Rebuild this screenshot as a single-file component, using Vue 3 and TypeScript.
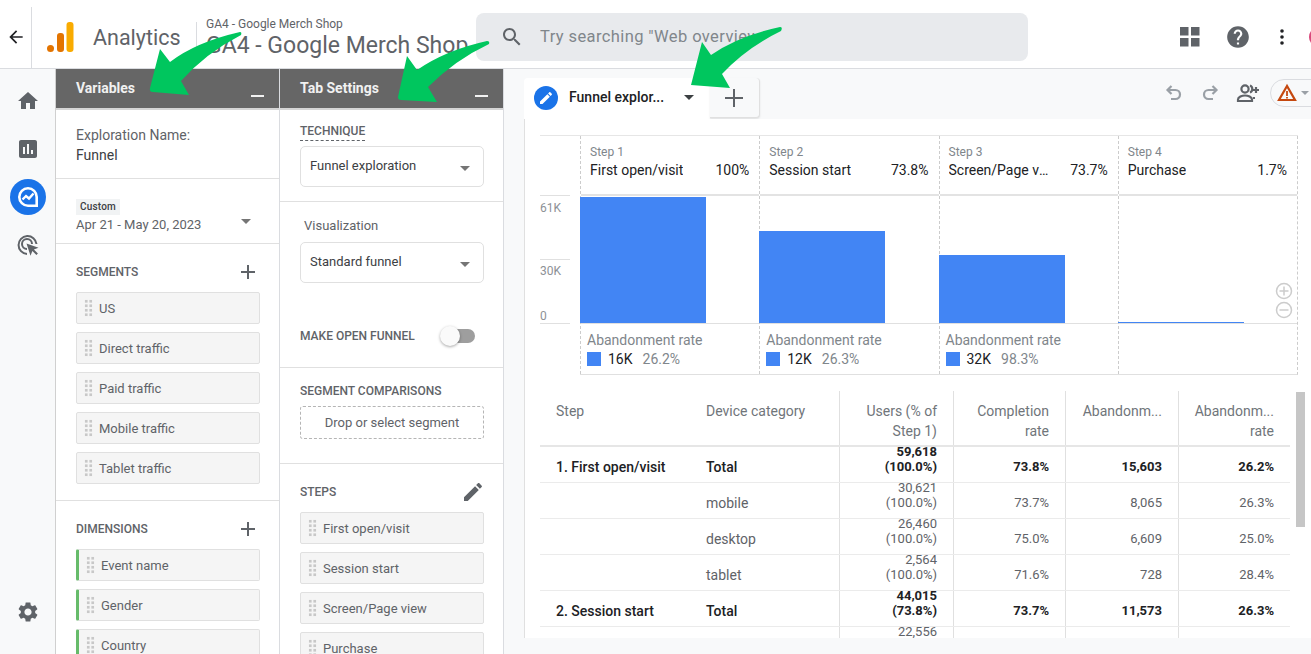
<script setup lang="ts">
// funnel data
const steps = [
  { label: 'Step 1', name: 'First open/visit', pct: '100%', height: 126, lost: '16K', rate: '26.2%' },
  { label: 'Step 2', name: 'Session start', pct: '73.8%', height: 92, lost: '12K', rate: '26.3%' },
  { label: 'Step 3', name: 'Screen/Page view', pct: '73.7%', height: 68, lost: '32K', rate: '98.3%' },
  { label: 'Step 4', name: 'Purchase', pct: '1.7%', height: 1, lost: '', rate: '' },
]

const segments = ['US', 'Direct traffic', 'Paid traffic', 'Mobile traffic', 'Tablet traffic']
const dimensions = ['Event name', 'Gender', 'Country']
const stepChips = ['First open/visit', 'Session start', 'Screen/Page view', 'Purchase']

const rows = [
  { step: '1. First open/visit', device: 'Total', users: '59,618', share: '(100.0%)', done: '73.8%', lost: '15,603', rate: '26.2%', bold: true },
  { step: '', device: 'mobile', users: '30,621', share: '(100.0%)', done: '73.7%', lost: '8,065', rate: '26.3%', bold: false },
  { step: '', device: 'desktop', users: '26,460', share: '(100.0%)', done: '75.0%', lost: '6,609', rate: '25.0%', bold: false },
  { step: '', device: 'tablet', users: '2,564', share: '(100.0%)', done: '71.6%', lost: '728', rate: '28.4%', bold: false },
  { step: '2. Session start', device: 'Total', users: '44,015', share: '(73.8%)', done: '73.7%', lost: '11,573', rate: '26.3%', bold: true },
  { step: '', device: '', users: '22,556', share: '(37.8%)', done: '', lost: '', rate: '', bold: false },
]
</script>

<template>
  <div class="page">
    <header class="topbar">
      <div class="back">
        <svg width="20" height="20" viewBox="0 0 24 24"><path fill="#202124" d="M20 11H7.83l5.59-5.59L12 4l-8 8 8 8 1.41-1.41L7.83 13H20v-2z" /></svg>
      </div>
      <svg class="logo" width="27" height="31" viewBox="0 0 27 31">
        <circle cx="3.5" cy="26.5" r="3.5" fill="#e37400" />
        <rect x="10" y="11" width="7" height="19" rx="3" fill="#e37400" />
        <rect x="19.5" y="0" width="7" height="30" rx="3" fill="#f9ab00" />
      </svg>
      <span class="brand">Analytics</span>
      <div class="account">
        <span class="account-small">GA4 - Google Merch Shop</span>
        <span class="account-big">GA4 - Google Merch Shop</span>
      </div>
      <div class="search">
        <svg width="24" height="24" viewBox="0 0 24 24"><path fill="#5f6368" d="M15.5 14h-.79l-.28-.27C15.41 12.59 16 11.11 16 9.5 16 5.91 13.09 3 9.5 3S3 5.91 3 9.5 5.91 16 9.5 16c1.61 0 3.09-.59 4.23-1.57l.27.28v.79l5 4.99L20.49 19l-4.99-5zm-6 0C7.01 14 5 11.99 5 9.5S7.01 5 9.5 5 14 7.01 14 9.5 11.99 14 9.5 14z" /></svg>
        <span>Try searching "Web overview"</span>
      </div>
      <div class="top-icons">
        <svg width="20" height="20" viewBox="0 0 20 20" fill="#5f6368">
          <rect x="0" y="0" width="8.5" height="8.5" /><rect x="11" y="0" width="8.5" height="8.5" />
          <rect x="0" y="11" width="8.5" height="8.5" /><rect x="11" y="11" width="8.5" height="8.5" />
        </svg>
        <svg class="help" width="26" height="26" viewBox="0 0 24 24"><path fill="#5f6368" d="M12 2C6.48 2 2 6.48 2 12s4.48 10 10 10 10-4.48 10-10S17.52 2 12 2zm1 17h-2v-2h2v2zm2.07-7.75l-.9.92C13.45 12.9 13 13.5 13 15h-2v-.5c0-1.1.45-2.1 1.17-2.83l1.24-1.26c.37-.36.59-.86.59-1.41 0-1.1-.9-2-2-2s-2 .9-2 2H8c0-2.21 1.79-4 4-4s4 1.79 4 4c0 .88-.36 1.68-.93 2.25z" /></svg>
        <svg class="dots" width="4" height="16" viewBox="0 0 4 16" fill="#202124">
          <circle cx="2" cy="2" r="1.8" /><circle cx="2" cy="8" r="1.8" /><circle cx="2" cy="14" r="1.8" />
        </svg>
        <span class="avatar"></span>
      </div>
    </header>

    <div class="body">
      <nav class="sidenav">
        <div class="nav-item">
          <svg width="24" height="24" viewBox="0 0 24 24"><path fill="#5f6368" d="M10 20v-6h4v6h5v-8h3L12 3 2 12h3v8z" /></svg>
        </div>
        <div class="nav-item">
          <svg width="24" height="24" viewBox="0 0 24 24"><path fill="#5f6368" d="M19 3H5c-1.1 0-2 .9-2 2v14c0 1.1.9 2 2 2h14c1.1 0 2-.9 2-2V5c0-1.1-.9-2-2-2zM9 17H7v-7h2v7zm4 0h-2V7h2v10zm4 0h-2v-4h2v4z" /></svg>
        </div>
        <div class="nav-item">
          <span class="nav-active">
            <svg width="24" height="24" viewBox="0 0 24 24" fill="none" stroke="#fff">
              <path stroke-width="2.6" d="M12 3.300a8.700 8.700 0 1 0 0 17.400h8.700V12A8.700 8.700 0 0 0 12 3.300z" />
              <path stroke-width="2.4" d="M6.500 14.500l3.500-3.500 3 2.500 4.500-5" />
            </svg>
          </span>
        </div>
        <div class="nav-item">
          <svg width="24" height="24" viewBox="0 0 24 24">
            <path fill="none" stroke="#5f6368" stroke-width="2" d="M20.5 11A9 9 0 1 0 11 21" />
            <path fill="none" stroke="#5f6368" stroke-width="2" d="M16 11a5 5 0 1 0-5 5" />
            <path fill="#5f6368" d="M10.5 10.5l12 4.2-4.600 1.900 4 4-1.500 1.500-4-4-1.900 4.600z" />
          </svg>
        </div>
        <div class="nav-item nav-bottom">
          <svg width="24" height="24" viewBox="0 0 24 24"><path fill="#5f6368" d="M19.14 12.94c.04-.3.06-.61.06-.94 0-.32-.02-.64-.07-.94l2.03-1.58c.18-.14.23-.41.12-.61l-1.92-3.32c-.12-.22-.37-.29-.59-.22l-2.39.96c-.5-.38-1.03-.7-1.62-.94l-.36-2.54c-.04-.24-.24-.41-.48-.41h-3.84c-.24 0-.43.17-.47.41l-.36 2.54c-.59.24-1.13.57-1.62.94l-2.39-.96c-.22-.08-.47 0-.59.22L2.74 8.87c-.12.21-.08.47.12.61l2.03 1.58c-.05.3-.09.63-.09.94s.02.64.07.94l-2.03 1.58c-.18.14-.23.41-.12.61l1.92 3.32c.12.22.37.29.59.22l2.39-.96c.5.38 1.03.7 1.62.94l.36 2.54c.05.24.24.41.48.41h3.84c.24 0 .44-.17.47-.41l.36-2.54c.59-.24 1.13-.56 1.62-.94l2.39.96c.22.08.47 0 .59-.22l1.92-3.32c.12-.22.07-.47-.12-.61l-2.01-1.58zM12 15.6c-1.98 0-3.6-1.62-3.6-3.6s1.62-3.6 3.6-3.6 3.6 1.62 3.6 3.6-1.62 3.6-3.6 3.6z" /></svg>
        </div>
      </nav>

      <!-- Variables -->
      <aside class="panel">
        <div class="panel-head"><span>Variables</span><i class="minimize"></i></div>
        <section class="sec sec-name">
          <div class="name-label">Exploration Name:</div>
          <div class="name-value">Funnel</div>
        </section>
        <section class="sec sec-date">
          <span class="custom">Custom</span>
          <div class="date-row"><span>Apr 21 - May 20, 2023</span><i class="caret date-caret"></i></div>
        </section>
        <section class="sec sec-list">
          <div class="sec-title">
            <span>SEGMENTS</span>
            <svg class="plus" width="16" height="16" viewBox="0 0 16 16"><path fill="#5f6368" d="M7 1h2v6h6v2H9v6H7V9H1V7h6z" /></svg>
          </div>
          <div v-for="s in segments" :key="s" class="chip"><i class="grip"></i>{{ s }}</div>
        </section>
        <section class="sec sec-list sec-dims">
          <div class="sec-title">
            <span>DIMENSIONS</span>
            <svg class="plus" width="16" height="16" viewBox="0 0 16 16"><path fill="#5f6368" d="M7 1h2v6h6v2H9v6H7V9H1V7h6z" /></svg>
          </div>
          <div v-for="d in dimensions" :key="d" class="chip chip-dim"><i class="grip"></i>{{ d }}</div>
        </section>
      </aside>

      <!-- Tab Settings -->
      <aside class="panel">
        <div class="panel-head"><span>Tab Settings</span><i class="minimize"></i></div>
        <section class="sec sec-tech">
          <span class="technique">TECHNIQUE</span>
          <div class="select">Funnel exploration<i class="caret"></i></div>
        </section>
        <section class="sec sec-vis">
          <div class="vis-label">Visualization</div>
          <div class="select">Standard funnel<i class="caret"></i></div>
          <div class="toggle-row">
            <span>MAKE OPEN FUNNEL</span>
            <span class="toggle"><i></i></span>
          </div>
        </section>
        <section class="sec sec-compare">
          <div class="compare-title">SEGMENT COMPARISONS</div>
          <div class="drop">Drop or select segment</div>
        </section>
        <section class="sec sec-list sec-steps">
          <div class="sec-title">
            <span>STEPS</span>
            <svg class="pencil" width="24" height="24" viewBox="0 0 24 24"><path fill="#5f6368" d="M3 17.25V21h3.75L17.81 9.94l-3.75-3.75L3 17.25zM20.71 7.04c.39-.39.39-1.02 0-1.41l-2.34-2.34c-.39-.39-1.02-.39-1.41 0l-1.83 1.83 3.75 3.75 1.83-1.83z" /></svg>
          </div>
          <div v-for="c in stepChips" :key="c" class="chip"><i class="grip"></i>{{ c }}</div>
        </section>
      </aside>

      <main class="main">
        <div class="tabbar">
          <div class="tab">
            <span class="tab-badge">
              <svg width="16" height="16" viewBox="0 0 24 24"><path fill="#fff" d="M3 17.25V21h3.75L17.81 9.94l-3.75-3.75L3 17.25zM20.71 7.04c.39-.39.39-1.02 0-1.41l-2.34-2.34c-.39-.39-1.02-.39-1.41 0l-1.83 1.83 3.75 3.75 1.83-1.83z" /></svg>
            </span>
            <span class="tab-name">Funnel explor...</span>
            <i class="tab-caret"></i>
          </div>
          <div class="tab-add">
            <svg width="18" height="18" viewBox="0 0 18 18"><path fill="#5f6368" d="M8 0h2v8h8v2h-8v8H8v-8H0V8h8z" /></svg>
          </div>
          <div class="tools">
            <svg width="20" height="20" viewBox="0 0 20 20" fill="none" stroke="#9aa0a6" stroke-width="2.2">
              <path d="M7.5 3L3.500 7l4 4" /><path d="M4 7h7.500a4.500 4.500 0 0 1 0 9H7" />
            </svg>
            <svg width="20" height="20" viewBox="0 0 20 20" fill="none" stroke="#9aa0a6" stroke-width="2.2">
              <path d="M12.500 3l4 4-4 4" /><path d="M16 7H8.500a4.500 4.500 0 0 0 0 9H13" />
            </svg>
            <svg width="24" height="24" viewBox="0 0 24 24" fill="none" stroke="#5f6368" stroke-width="2.2">
              <circle cx="9" cy="8" r="3.600" /><path d="M2 20v-1.500c0-2.500 4-4 7-4s7 1.500 7 4V20z" />
              <path d="M14 4.500a3.800 3.800 0 0 1 0 7" /><path d="M17 17h2" />
              <path d="M20 6v6M17 9h6" />
            </svg>
            <div class="warn">
              <svg width="20" height="20" viewBox="0 0 20 20">
                <path fill="none" stroke="#c5480f" stroke-width="2.200" d="M10 3L2 17h16z" />
                <path fill="#c5480f" d="M9.100 8h1.800v5H9.100zM9.100 14h1.800v1.500H9.100z" />
              </svg>
              <i class="warn-caret"></i>
            </div>
          </div>
        </div>

        <div class="canvas">
          <div class="funnel">
            <div class="axis">
              <div class="tick">61K</div>
              <div class="tick tick-last"><span>30K</span><span>0</span></div>
            </div>
            <div class="step-cols">
              <div v-for="st in steps" :key="st.label" class="step-col">
                <div class="step-head">
                  <div class="step-label">{{ st.label }}</div>
                  <div class="step-line"><span class="step-name">{{ st.name }}</span><span>{{ st.pct }}</span></div>
                </div>
                <div class="plot">
                  <div class="bar" :style="{ height: st.height + 'px' }"></div>
                </div>
                <div class="abandon">
                  <template v-if="st.lost">
                    <div class="abandon-title">Abandonment rate</div>
                    <div class="abandon-line"><i class="swatch"></i><span class="abandon-num">{{ st.lost }}</span><span class="abandon-rate">{{ st.rate }}</span></div>
                  </template>
                </div>
              </div>
            </div>
            <div class="zoom-btns">
              <svg width="18" height="18" viewBox="0 0 18 18" fill="none" stroke="#ccc" stroke-width="1.500"><circle cx="9" cy="9" r="7.500" /><path d="M4.500 9h9M9 4.500v9" /></svg>
              <svg width="18" height="18" viewBox="0 0 18 18" fill="none" stroke="#ccc" stroke-width="1.500"><circle cx="9" cy="9" r="7.500" /><path d="M4.500 9h9" /></svg>
            </div>
          </div>

          <div class="table">
            <div class="t-row t-head">
              <div class="t-cell t-left">Step</div>
              <div class="t-cell t-left">Device category</div>
              <div class="t-cell t-num">Users (% of<br />Step 1)</div>
              <div class="t-cell t-num">Completion<br />rate</div>
              <div class="t-cell t-num">Abandonm...</div>
              <div class="t-cell t-num">Abandonm...<br />rate</div>
            </div>
            <div v-for="(r, i) in rows" :key="i" class="t-row" :class="{ 't-bold': r.bold }">
              <div class="t-cell t-left t-step">{{ r.step }}</div>
              <div class="t-cell t-left t-device">{{ r.device }}</div>
              <div class="t-cell t-num t-users"><span>{{ r.users }}</span><span>{{ r.share }}</span></div>
              <div class="t-cell t-num t-val">{{ r.done }}</div>
              <div class="t-cell t-num t-val">{{ r.lost }}</div>
              <div class="t-cell t-num t-val">{{ r.rate }}</div>
            </div>
          </div>
          <div class="scrollbar"></div>
        </div>
      </main>
    </div>

    <!-- green annotation arrows drawn on the screenshot -->
    <svg class="arrows" width="1311" height="654" viewBox="0 0 1311 654" fill="#00c65e">
      <path d="M240 32Q196 42 170 62L160 49L150 88Q149 92 153 92L189 95L181 81Q206 53 241 35Q242 32 240 32Z" />
      <path d="M487 41Q446 50 417 70L407 56L398 97Q398 100 401 100L437 102L428 87Q455 60 489 44Q490 41 487 41Z" />
      <path d="M780 27Q738 36 711 55L702 42L691 85L730 88L722 74Q746 48 781 31Q783 27 780 27Z" />
    </svg>
  </div>
</template>

<style>
html,
body {
  margin: 0;
  background: #fff;
}
</style>

<style scoped>
.page {
  position: relative;
  width: 1311px;
  height: 654px;
  overflow: hidden;
  display: flex;
  flex-direction: column;
  font-family: Roboto, "Liberation Sans", sans-serif;
  color: #5f6368;
  background: #fff;
}
i {
  display: block;
  font-style: normal;
}

/* top bar */
.topbar {
  height: 69px;
  flex: none;
  box-sizing: border-box;
  border-bottom: 1px solid #dadce0;
  padding-top: 6px;
  display: flex;
  align-items: center;
}
.back {
  width: 32px;
  height: 61px;
  flex: none;
  box-sizing: border-box;
  border-right: 1px solid #dadce0;
  display: flex;
  align-items: center;
  justify-content: center;
}
.logo {
  flex: none;
  margin-left: 15px;
}
.brand {
  margin-left: 19px;
  margin-top: 8px;
  font-size: 21.5px;
  width: 104px;
  flex: none;
  height: 39px;
  line-height: 31px;
  box-sizing: border-box;
  border-right: 1px solid #dadce0;
}
.account {
  margin-left: 9px;
  padding-top: 2px;
  width: 270px;
  flex: none;
  white-space: nowrap;
  overflow: hidden;
}
.account-small {
  display: block;
  font-size: 12px;
  line-height: 14px;
}
.account-big {
  display: block;
  font-size: 23px;
  line-height: 28px;
  margin-top: 1px;
}
.search {
  width: 552px;
  height: 48px;
  flex: none;
  background: #e8eaed;
  border-radius: 8px;
  display: flex;
  align-items: center;
  padding-left: 24px;
  box-sizing: border-box;
  font-size: 16.5px;
  letter-spacing: 0.4px;
  color: #80868b;
}
.search span {
  margin-left: 16px;
  margin-top: -2px;
  width: 216px;
  overflow: hidden;
  white-space: nowrap;
}
.top-icons {
  margin-left: 152px;
  display: flex;
  align-items: center;
  flex: none;
}
.top-icons svg {
  flex: none;
}
.help {
  margin-left: 25px;
}
.dots {
  margin-left: 29px;
}
.avatar {
  width: 20px;
  height: 20px;
  border-radius: 50%;
  background: #d9487b;
  margin-left: 25px;
  flex: none;
}

.body {
  flex: 1;
  display: flex;
  min-height: 0;
}

/* left nav */
.sidenav {
  width: 56px;
  flex: none;
  box-sizing: border-box;
  background: #f8f9fa;
  border-right: 1px solid #d0d0d0;
  padding: 8px 0 18px;
  display: flex;
  flex-direction: column;
}
.nav-item {
  height: 48px;
  display: flex;
  align-items: center;
  justify-content: center;
}
.nav-bottom {
  margin-top: auto;
}
.nav-active {
  width: 36px;
  height: 36px;
  border-radius: 50%;
  background: #1a73e8;
  display: flex;
  align-items: center;
  justify-content: center;
}

/* panels */
.panel {
  width: 224px;
  flex: none;
  box-sizing: border-box;
  border-right: 1px solid #dadce0;
  background: #fff;
  overflow: hidden;
}
.panel-head {
  height: 41px;
  box-sizing: border-box;
  background: #666;
  border-bottom: 2px solid #d5d5d5;
  color: #f1f1f1;
  font-size: 14px;
  font-weight: 700;
  display: flex;
  align-items: center;
  padding: 0 15px 2px 20px;
  justify-content: space-between;
}
.minimize {
  width: 13px;
  height: 2px;
  background: #f1f1f1;
  margin-top: 17px;
}
.sec {
  box-sizing: border-box;
  border-bottom: 1px solid #e0e0e0;
  padding: 0 19px 0 20px;
}
.sec-name {
  height: 69px;
  padding-top: 16px;
  font-size: 14px;
}
.name-label {
  line-height: 18px;
}
.name-value {
  line-height: 18px;
  margin-top: 2px;
  color: #3c4043;
}
.sec-date {
  height: 65px;
  padding-top: 20px;
}
.custom {
  display: block;
  width: fit-content;
  background: #f1f3f4;
  color: #3c4043;
  font-size: 10px;
  font-weight: 500;
  letter-spacing: 0.2px;
  line-height: 16px;
  padding: 0 4px;
}
.date-row {
  display: flex;
  justify-content: space-between;
  font-size: 13px;
  line-height: 18px;
  margin-top: 1px;
}
.caret {
  width: 0;
  height: 0;
  border-left: 5px solid transparent;
  border-right: 5px solid transparent;
  border-top: 5px solid #757575;
}
.date-caret {
  margin: 3px 9px 0 0;
}
.sec-list {
  height: 257px;
  padding-top: 19px;
}
.sec-dims {
  border-bottom: none;
  height: auto;
}
.sec-title {
  height: 18px;
  display: flex;
  align-items: center;
  justify-content: space-between;
  font-size: 12px;
  font-weight: 500;
  margin-bottom: 11px;
}
.plus {
  margin-right: 4px;
}
.chip {
  height: 32px;
  box-sizing: border-box;
  margin-bottom: 8px;
  background: #f5f5f5;
  border: 1px solid #e0e0e0;
  border-radius: 2px;
  display: flex;
  align-items: center;
  font-size: 13px;
  padding-left: 7px;
  color: #5f6368;
}
.chip-dim {
  border-left: 3px solid #66bb6a;
}
.grip {
  width: 9px;
  height: 18px;
  margin-right: 6px;
  flex: none;
  background-image: radial-gradient(circle, #c8c8c8 1.4px, transparent 1.6px);
  background-size: 4.500px 4.500px;
}
.technique {
  display: block;
  width: fit-content;
  font-size: 12px;
  font-weight: 500;
  line-height: 15px;
  border-bottom: 1px dashed #5f6368;
  padding-bottom: 1px;
}
.sec-tech {
  height: 92px;
  padding-top: 14px;
}
.select {
  height: 41px;
  box-sizing: border-box;
  border: 1px solid #e0e0e0;
  border-radius: 5px;
  margin-top: 5px;
  padding: 0 13px 3px 9px;
  display: flex;
  align-items: center;
  justify-content: space-between;
  font-size: 13px;
  color: #3c4043;
}
.select .caret {
  margin-top: 6px;
}
.sec-vis {
  height: 166px;
  padding-top: 15px;
}
.vis-label {
  font-size: 13px;
  line-height: 18px;
  padding-left: 4px;
  margin-bottom: 3px;
}
.sec-vis .select {
  margin-top: 7px;
}
.toggle-row {
  display: flex;
  align-items: center;
  justify-content: space-between;
  font-size: 12px;
  font-weight: 500;
  margin-top: 43px;
  height: 20px;
  padding-right: 9px;
}
.toggle {
  position: relative;
  width: 30px;
  height: 14px;
  background: #9e9e9e;
  border-radius: 7px;
}
.toggle i {
  position: absolute;
  left: -5px;
  top: -3px;
  width: 20px;
  height: 20px;
  border-radius: 50%;
  background: #fafafa;
  box-shadow: 0 1px 3px rgba(0, 0, 0, 0.35);
}
.sec-compare {
  height: 96px;
  padding-top: 15px;
}
.compare-title {
  font-size: 12px;
  font-weight: 500;
  line-height: 16px;
}
.drop {
  height: 33px;
  box-sizing: border-box;
  margin-top: 7px;
  border: 1px dashed #b5b5b5;
  border-radius: 3px;
  display: flex;
  align-items: center;
  justify-content: center;
  font-size: 13px;
}
.sec-steps {
  border-bottom: none;
  height: auto;
}
.pencil {
  margin-right: -1px;
}

/* main */
.main {
  flex: 1;
  min-width: 0;
  background: #f8f9fa;
  overflow: hidden;
}
.tabbar {
  height: 50px;
  box-sizing: border-box;
  padding: 9px 0 0 20px;
  display: flex;
  align-items: flex-start;
}
.tab {
  width: 186px;
  height: 41px;
  flex: none;
  box-sizing: border-box;
  background: #fff;
  border-radius: 4px 4px 0 0;
  display: flex;
  align-items: center;
  padding-left: 10px;
  padding-bottom: 2px;
}
.tab-badge {
  width: 24px;
  height: 24px;
  border-radius: 50%;
  background: #1a73e8;
  display: flex;
  align-items: center;
  justify-content: center;
  flex: none;
}
.tab-name {
  margin-left: 11px;
  margin-top: -1px;
  font-size: 14px;
  font-weight: 500;
  color: #202124;
  white-space: nowrap;
}
.tab-caret {
  margin-left: 20px;
  width: 0;
  height: 0;
  border-left: 5px solid transparent;
  border-right: 5px solid transparent;
  border-top: 5px solid #3c4043;
}
.tab-add {
  width: 50px;
  height: 40px;
  flex: none;
  box-sizing: border-box;
  background: #f8f9fa;
  border-right: 1px solid #e0e0e0;
  border-bottom: 1px solid #e0e0e0;
  border-radius: 0 4px 4px 0;
  box-shadow: 0 1px 2px rgba(0, 0, 0, 0.1);
  padding-right: 2px;
  display: flex;
  align-items: center;
  justify-content: center;
}
.tools {
  margin-left: auto;
  height: 30px;
  display: flex;
  align-items: center;
  flex: none;
  gap: 16px;
  margin-right: -41px;
}
.warn {
  width: 82px;
  height: 28px;
  box-sizing: border-box;
  border: 1px solid #dadce0;
  border-radius: 14px;
  display: flex;
  align-items: center;
  padding-left: 6px;
  margin-left: -6px;
}
.warn-caret {
  margin-left: 4px;
  width: 0;
  height: 0;
  border-left: 4px solid transparent;
  border-right: 4px solid transparent;
  border-top: 4px solid #9aa0a6;
}
.canvas {
  position: relative;
  height: 519px;
  margin-left: 20px;
  box-sizing: border-box;
  background: #fff;
  border-left: 1px solid #e0e0e0;
  padding: 16px 0 0 15px;
  overflow: hidden;
}

/* funnel chart */
.funnel {
  position: relative;
  width: 758px;
  display: flex;
  border-top: 1px solid #e6e6e6;
}
.axis {
  width: 40px;
  flex: none;
  padding-top: 59px;
  font-size: 12px;
  color: #8d9196;
}
.tick {
  width: 30px;
  height: 64px;
  box-sizing: border-box;
  border-top: 1px solid #e0e0e0;
  line-height: 14px;
  padding-top: 5px;
}
.tick-last {
  display: flex;
  flex-direction: column;
  justify-content: space-between;
  border-bottom: 1px solid #e0e0e0;
  height: 65px;
  padding-top: 4px;
}
.step-cols {
  width: 718px;
  display: grid;
  grid-template-columns: repeat(4, 1fr);
  border-right: 1px dashed #ccc;
  box-sizing: border-box;
  border-bottom: 1px solid #e0e0e0;
}
.step-col {
  box-sizing: border-box;
  border-left: 1px dashed #ccc;
  min-width: 0;
}
.step-head {
  height: 60px;
  box-sizing: border-box;
  border-bottom: 2px solid #e3e3e3;
  padding: 9px 10px 0 9px;
}
.step-label {
  font-size: 12px;
  line-height: 14px;
  color: #80868b;
}
.step-line {
  display: flex;
  justify-content: space-between;
  gap: 20px;
  margin-top: 1px;
  font-size: 14px;
  line-height: 20px;
  color: #202124;
}
.step-name {
  white-space: nowrap;
  overflow: hidden;
  text-overflow: ellipsis;
}
.plot {
  height: 128px;
  box-sizing: border-box;
  border-bottom: 1px solid #e0e0e0;
  display: flex;
  align-items: flex-end;
}
.bar {
  width: 126px;
  margin-left: -1px;
  background: #4285f4;
}
.abandon {
  height: 50px;
  box-sizing: border-box;
  padding: 7px 0 0 6px;
}
.abandon-title {
  font-size: 14px;
  line-height: 18px;
  color: #80868b;
}
.abandon-line {
  display: flex;
  align-items: center;
  font-size: 14px;
  line-height: 16px;
  margin-top: 2px;
}
.swatch {
  width: 14px;
  height: 14px;
  background: #4285f4;
  flex: none;
}
.abandon-num {
  margin-left: 7px;
  color: #202124;
}
.abandon-rate {
  margin-left: 10px;
  color: #80868b;
}
.zoom-btns {
  position: absolute;
  right: 5px;
  top: 146px;
  display: flex;
  flex-direction: column;
  gap: 1px;
}

/* table */
.table {
  width: 750px;
  margin-top: 16px;
  font-size: 13px;
}
.t-row {
  display: grid;
  grid-template-columns: 150px 149px 114px 112px 113px 112px;
  height: 36px;
  box-sizing: border-box;
  border-bottom: 1px solid #ebebeb;
}
.t-head {
  height: 56px;
  border-bottom: 2px solid #e6e6e6;
  font-size: 14px;
  line-height: 20px;
  color: #70757a;
}
.t-cell {
  box-sizing: border-box;
  overflow: hidden;
}
.t-left {
  padding-left: 16px;
}
.t-num {
  text-align: right;
  padding-right: 16px;
  border-left: 1px solid #e0e0e0;
}
.t-head .t-cell {
  padding-top: 10px;
}
.t-step,
.t-device {
  font-size: 14px;
  padding-top: 11px;
  line-height: 18px;
}
.t-users {
  display: flex;
  flex-direction: column;
  justify-content: flex-end;
  line-height: 15px;
  padding-bottom: 8px;
}
.t-val {
  line-height: 18px;
  padding-top: 11px;
}
.t-bold {
  color: #202124;
  font-weight: 700;
}
.t-bold .t-step,
.t-bold .t-device {
  font-weight: 500;
}
.scrollbar {
  position: absolute;
  left: 771px;
  top: 273px;
  width: 9px;
  height: 135px;
  background: #c6c6c6;
}

.arrows {
  position: absolute;
  left: 0;
  top: 0;
  pointer-events: none;
}
</style>
